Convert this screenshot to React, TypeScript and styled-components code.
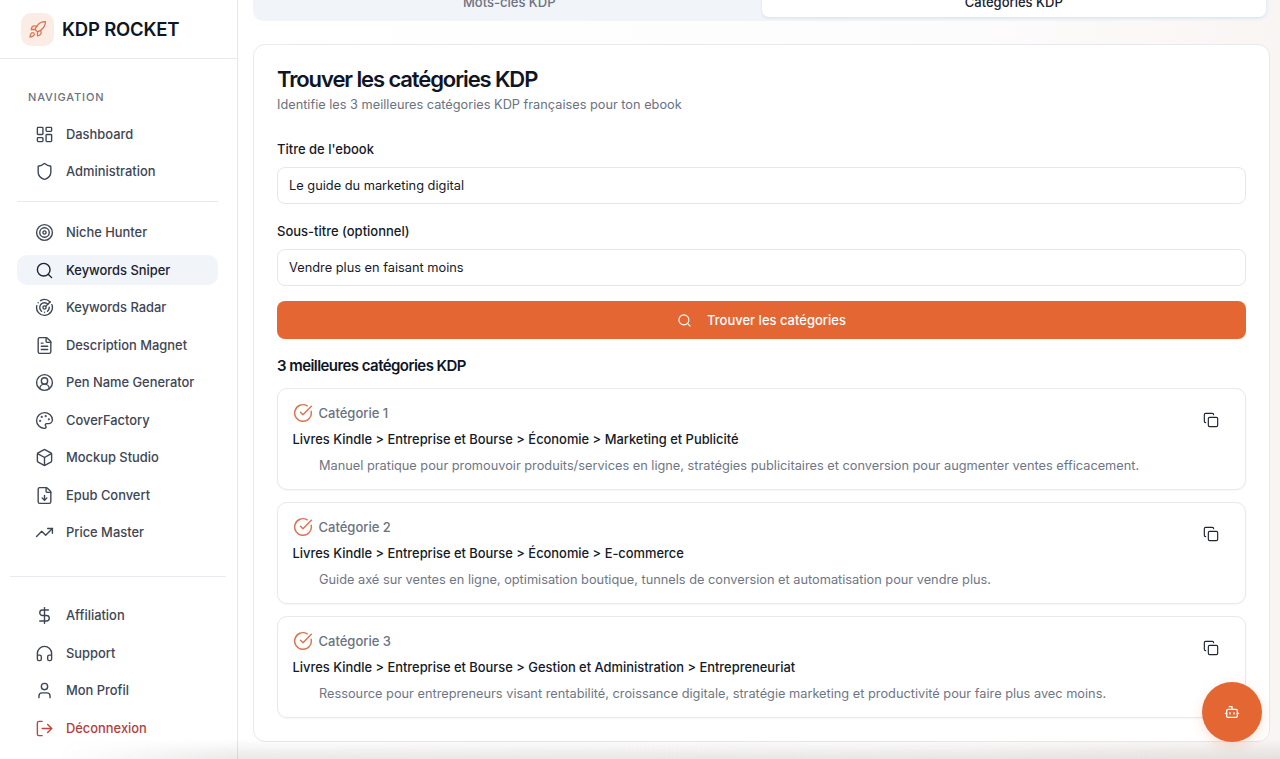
import React from "react";
import styled, { createGlobalStyle } from "styled-components";
import {
  Bot,
  Box,
  CircleCheckBig,
  CircleUserRound,
  Copy,
  DollarSign,
  FileDown,
  FileText,
  Headphones,
  LayoutDashboard,
  LogOut,
  LucideIcon,
  Palette,
  Radar,
  Rocket,
  Search,
  Shield,
  Target,
  TrendingUp,
  User,
} from "lucide-react";

const GlobalStyle = createGlobalStyle`
  html, body {
    margin: 0;
    height: 100%;
    overflow: hidden;
    background: #fff;
    font-family: Inter, "Noto Sans", sans-serif;
    color: #0f1524;
  }
  * { box-sizing: border-box; }
`;

const Page = styled.div`
  display: flex;
  width: 1280px;
  height: 759px;
  overflow: hidden;
  position: relative;
`;

const Sidebar = styled.aside`
  width: 238px;
  flex-shrink: 0;
  background: #fff;
  border-right: 1px solid #e4e7ee;
  display: flex;
  flex-direction: column;
`;

const Brand = styled.div`
  height: 59px;
  padding: 0 20px 0 21px;
  display: flex;
  align-items: center;
  gap: 8px;
  border-bottom: 1px solid #e8eaef;
`;

const BrandLogo = styled.div`
  width: 33px;
  height: 33px;
  border-radius: 10px;
  background: #fbece5;
  color: #dc7350;
  display: flex;
  align-items: center;
  justify-content: center;
`;

const BrandName = styled.div`
  font-size: 18.5px;
  font-weight: 600;
  letter-spacing: -0.2px;
  color: #0f1524;
`;

const NavLabel = styled.div`
  margin: 32px 0 0 28px;
  height: 12px;
  line-height: 12px;
  font-size: 11px;
  font-weight: 500;
  letter-spacing: 0.85px;
  color: #6b7280;
`;

const NavGroup = styled.nav<{ $top: number }>`
  display: flex;
  flex-direction: column;
  gap: 7.5px;
  margin: ${(p) => p.$top}px 19px 0 17px;
`;

const NavItem = styled.div<{ $active?: boolean; $danger?: boolean }>`
  height: 30px;
  padding-left: 18px;
  display: flex;
  align-items: center;
  gap: 12px;
  border-radius: 10px;
  font-size: 12.9px;
  font-weight: 500;
  background: ${(p) => (p.$active ? "#f1f4f9" : "transparent")};
  color: ${(p) => (p.$danger ? "#b3403c" : p.$active ? "#1a2130" : "#3e4654")};
  svg {
    flex-shrink: 0;
    color: ${(p) => (p.$danger ? "#c4423b" : p.$active ? "#1a2130" : "#3e4654")};
  }
`;

const NavDivider = styled.div<{ $wide?: boolean }>`
  height: 1px;
  background: #e8eaef;
  margin: ${(p) => (p.$wide ? "28px 11px 24px 10px" : "14px 19px 16px 17px")};
`;

const Main = styled.main`
  flex: 1;
  min-width: 0;
  padding: 0 10px 0 15px;
  background: linear-gradient(90deg, #ffffff 0%, #fdfcfc 70%, #f9f5f3 100%);
`;

const Tabs = styled.div`
  height: 39px;
  margin-top: -18px;
  padding: 4px;
  display: grid;
  grid-template-columns: 1fr 1fr;
  gap: 0;
  background: #f1f4f9;
  border-radius: 10px;
`;

const Tab = styled.div<{ $active?: boolean }>`
  display: flex;
  align-items: center;
  justify-content: center;
  font-size: 13px;
  font-weight: 500;
  border-radius: 7px;
  color: ${(p) => (p.$active ? "#1a2130" : "#6b7280")};
  background: ${(p) => (p.$active ? "#fff" : "transparent")};
  box-shadow: ${(p) => (p.$active ? "0 1px 3px rgba(30, 40, 70, 0.1)" : "none")};
`;

const Card = styled.section`
  margin-top: 23px;
  height: 698px;
  padding: 20px 23px 0;
  background: #fff;
  border: 1px solid #e7e9ee;
  border-radius: 12px;
`;

const Title = styled.h1`
  margin: 0;
  font-size: 22px;
  line-height: 28px;
  font-weight: 600;
  letter-spacing: -1.1px;
  color: #0f1524;
`;

const Subtitle = styled.p`
  margin: 3px 0 0;
  font-size: 12.75px;
  line-height: 18px;
  color: #6b7280;
`;

const FieldLabel = styled.div<{ $top: number }>`
  margin-top: ${(p) => p.$top}px;
  font-size: 13px;
  line-height: 16px;
  font-weight: 500;
  color: #141a28;
`;

const Input = styled.div`
  margin-top: 10px;
  height: 37px;
  padding: 0 11px;
  display: flex;
  align-items: center;
  font-size: 12.8px;
  color: #141a28;
  background: #fff;
  border: 1px solid #e4e7ee;
  border-radius: 8px;
`;

const SubmitButton = styled.div`
  margin-top: 15px;
  height: 38px;
  display: flex;
  align-items: center;
  justify-content: center;
  gap: 15px;
  font-size: 13px;
  font-weight: 500;
  color: #fff;
  background: #e46733;
  border-radius: 8px;
`;

const ResultsTitle = styled.h2`
  margin: 17px 0 0;
  font-size: 15px;
  line-height: 20px;
  font-weight: 600;
  letter-spacing: -0.56px;
  color: #0f1524;
`;

const ResultList = styled.div`
  margin-top: 12px;
  display: flex;
  flex-direction: column;
  gap: 12px;
`;

const ResultCard = styled.article`
  position: relative;
  height: 102px;
  padding: 14px 15px 0 14.5px;
  background: #fff;
  border: 1px solid #e7e9ee;
  border-radius: 10px;
  box-shadow: 0 1px 2px rgba(30, 40, 70, 0.04);
`;

const ResultHead = styled.div`
  display: flex;
  align-items: center;
  gap: 6px;
  height: 20px;
  font-size: 13px;
  font-weight: 500;
  color: #6b7280;
  svg {
    color: #dc7350;
  }
`;

const ResultPath = styled.div`
  margin-top: 8px;
  font-size: 12.9px;
  line-height: 18px;
  font-weight: 500;
  color: #141a28;
`;

const ResultText = styled.div`
  margin: 8px 0 0 26.5px;
  font-size: 12.78px;
  line-height: 18px;
  color: #6f7683;
`;

const CopyButton = styled.div`
  position: absolute;
  top: 23px;
  right: 26px;
  width: 16px;
  height: 16px;
  color: #1f2633;
`;

const ChatButton = styled.div`
  position: absolute;
  left: 1202px;
  top: 682px;
  width: 60px;
  height: 60px;
  border-radius: 50%;
  display: flex;
  align-items: center;
  justify-content: center;
  color: #fff;
  background: #e46733;
  box-shadow: 0 4px 12px rgba(228, 103, 51, 0.2);
  z-index: 2;
`;

const BottomShade = styled.div`
  position: absolute;
  left: 60px;
  right: 0;
  bottom: 0;
  height: 20px;
  pointer-events: none;
  background: linear-gradient(180deg, rgba(120, 115, 110, 0) 0%, rgba(120, 115, 110, 0.16) 100%);
  -webkit-mask-image: linear-gradient(90deg, transparent 0, #000 180px);
  mask-image: linear-gradient(90deg, transparent 0, #000 180px);
`;

type NavEntry = { label: string; icon: LucideIcon; active?: boolean; danger?: boolean };

const adminNav: NavEntry[] = [
  { label: "Dashboard", icon: LayoutDashboard },
  { label: "Administration", icon: Shield },
];

const toolsNav: NavEntry[] = [
  { label: "Niche Hunter", icon: Target },
  { label: "Keywords Sniper", icon: Search, active: true },
  { label: "Keywords Radar", icon: Radar },
  { label: "Description Magnet", icon: FileText },
  { label: "Pen Name Generator", icon: CircleUserRound },
  { label: "CoverFactory", icon: Palette },
  { label: "Mockup Studio", icon: Box },
  { label: "Epub Convert", icon: FileDown },
  { label: "Price Master", icon: TrendingUp },
];

const accountNav: NavEntry[] = [
  { label: "Affiliation", icon: DollarSign },
  { label: "Support", icon: Headphones },
  { label: "Mon Profil", icon: User },
  { label: "Déconnexion", icon: LogOut, danger: true },
];

const results = [
  {
    name: "Catégorie 1",
    path: "Livres Kindle > Entreprise et Bourse > Économie > Marketing et Publicité",
    text: "Manuel pratique pour promouvoir produits/services en ligne, stratégies publicitaires et conversion pour augmenter ventes efficacement.",
  },
  {
    name: "Catégorie 2",
    path: "Livres Kindle > Entreprise et Bourse > Économie > E-commerce",
    text: "Guide axé sur ventes en ligne, optimisation boutique, tunnels de conversion et automatisation pour vendre plus.",
  },
  {
    name: "Catégorie 3",
    path: "Livres Kindle > Entreprise et Bourse > Gestion et Administration > Entrepreneuriat",
    text: "Ressource pour entrepreneurs visant rentabilité, croissance digitale, stratégie marketing et productivité pour faire plus avec moins.",
  },
];

function NavList({ items, top }: { items: NavEntry[]; top: number }) {
  return (
    <NavGroup $top={top}>
      {items.map(({ label, icon: Icon, active, danger }) => (
        <NavItem key={label} $active={active} $danger={danger}>
          <Icon size={19} strokeWidth={1.75} />
          {label}
        </NavItem>
      ))}
    </NavGroup>
  );
}

export default function App() {
  return (
    <Page>
      <GlobalStyle />
      <Sidebar>
        <Brand>
          <BrandLogo>
            <Rocket size={19} strokeWidth={1.6} />
          </BrandLogo>
          <BrandName>KDP ROCKET</BrandName>
        </Brand>
        <NavLabel>NAVIGATION</NavLabel>
        <NavList items={adminNav} top={16} />
        <NavDivider />
        <NavList items={toolsNav} top={0} />
        <NavDivider $wide />
        <NavList items={accountNav} top={0} />
      </Sidebar>
      <Main>
        <Tabs>
          <Tab>Mots-clés KDP</Tab>
          <Tab $active>Catégories KDP</Tab>
        </Tabs>
        <Card>
          <Title>Trouver les catégories KDP</Title>
          <Subtitle>Identifie les 3 meilleures catégories KDP françaises pour ton ebook</Subtitle>
          <FieldLabel $top={27}>Titre de l'ebook</FieldLabel>
          <Input>Le guide du marketing digital</Input>
          <FieldLabel $top={19}>Sous-titre (optionnel)</FieldLabel>
          <Input>Vendre plus en faisant moins</Input>
          <SubmitButton>
            <Search size={15} strokeWidth={1.75} />
            Trouver les catégories
          </SubmitButton>
          <ResultsTitle>3 meilleures catégories KDP</ResultsTitle>
          <ResultList>
            {results.map((r) => (
              <ResultCard key={r.name}>
                <ResultHead>
                  <CircleCheckBig size={20} strokeWidth={1.75} />
                  {r.name}
                </ResultHead>
                <ResultPath>{r.path}</ResultPath>
                <ResultText>{r.text}</ResultText>
                <CopyButton>
                  <Copy size={16} strokeWidth={1.75} />
                </CopyButton>
              </ResultCard>
            ))}
          </ResultList>
        </Card>
      </Main>
      <ChatButton>
        <Bot size={16} strokeWidth={2} />
      </ChatButton>
      <BottomShade />
    </Page>
  );
}
